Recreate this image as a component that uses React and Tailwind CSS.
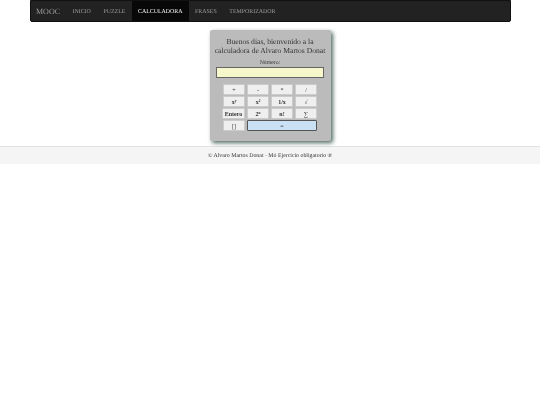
import React from "react";

const Key = ({ children, className = "", wide = false }) => (
  <button
    className={`h-[11.5px] flex items-center justify-center rounded-[1px] border-[0.5px] border-[#ccc] bg-[#efefef] text-[6px] leading-none text-[#333] ${
      wide ? "w-[70px]" : "w-[22px]"
    } ${className}`}
  >
    {children}
  </button>
);

const links = ["INICIO", "PUZZLE", "CALCULADORA", "FRASES", "TEMPORIZADOR"];

const Sup = ({ base, exp }) => (
  <span className="font-bold">
    {base}
    <sup className="text-[3.5px]">{exp}</sup>
  </span>
);

const App = () => {
  return (
    <div className="w-[540px] h-[405px] bg-white overflow-hidden font-['Liberation_Serif',serif] [will-change:transform] [text-rendering:geometricPrecision]">
      <div className="mx-[29.5px] h-[22px] flex bg-[#222] border-[0.5px] border-[#111] rounded-b-[2px]">
        <div className="pl-[5.5px] pr-[6.2px] pt-[1px] flex items-center text-[8px] text-[#9d9d9d]">
          MOOC
        </div>
        {links.map((link) => (
          <div
            key={link}
            className={`px-[6.3px] pt-[2px] flex items-center text-[5.9px] ${
              link === "CALCULADORA" ? "bg-[#080808] text-white" : "text-[#9d9d9d]"
            }`}
          >
            {link}
          </div>
        ))}
      </div>

      <div className="flex justify-center mt-[8px]">
        <div className="w-[121px] h-[111px] bg-[#bbb] rounded-[2px] shadow-[2px_2px_4px_#4f6b63] flex flex-col items-center pt-[7px]">
          <p className="w-[114px] text-center text-[7.6px] leading-[9.4px] text-[#333]">
            Buenos días, bienvenido a la calculadora de Alvaro Martos Donat
          </p>
          <p className="mt-[3px] text-[5.8px] leading-[8px] text-[#333]">Número:</p>
          <div className="w-[108px] h-[11.5px] bg-[#f6f8cc] border border-[#666]"></div>
          <div className="mt-[5.5px] flex flex-col gap-[0.5px]">
            <div className="flex gap-[2px]">
              <Key>+</Key>
              <Key>-</Key>
              <Key>*</Key>
              <Key>/</Key>
            </div>
            <div className="flex gap-[2px]">
              <Key><Sup base="x" exp="y" /></Key>
              <Key><Sup base="x" exp="2" /></Key>
              <Key className="font-bold">1/x</Key>
              <Key>√</Key>
            </div>
            <div className="flex gap-[2px] -ml-[1px]">
              <Key className="font-bold !w-[23px]">Entero</Key>
              <Key><Sup base="2" exp="n" /></Key>
              <Key className="font-bold">n!</Key>
              <Key>∑</Key>
            </div>
            <div className="flex gap-[2px]">
              <Key>[]</Key>
              <Key wide className="!bg-[#c9e0f5] !border-[#555] border">=</Key>
            </div>
          </div>
        </div>
      </div>

      <div className="mt-[5px] h-[18px] pt-[1px] flex items-center justify-center bg-[#f5f5f5] border-t-[0.5px] border-[#e3e3e3] text-[5.85px] text-[#333]">
        © Alvaro Martos Donat - Mó Ejercicio obligatorio ®
      </div>
    </div>
  );
};

export default App;
